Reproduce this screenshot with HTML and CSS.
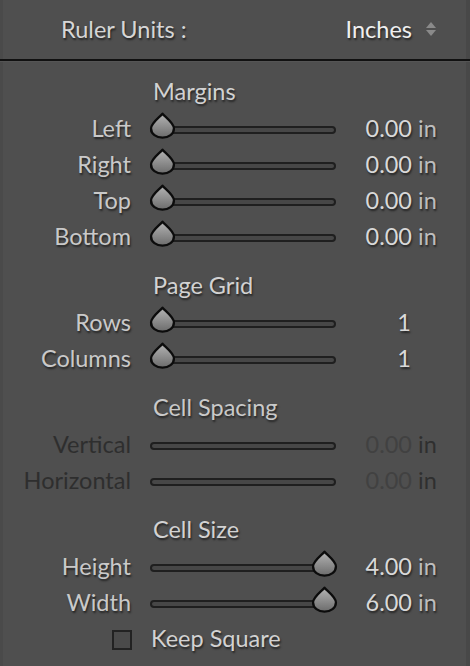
FILE: index.html
```html
<!DOCTYPE html>
<html>
<head>
<meta charset="utf-8">
<link rel="stylesheet" href="styles.css">
</head>
<body>
<div class="panel">
  <div class="units">
    <span class="units-label">Ruler Units :</span>
    <span class="units-value">Inches
      <svg class="spinner" width="12" height="16" viewBox="0 0 12 16"><path d="M6 1 L11 7 H1 Z" fill="#8a8a8a"/><path d="M1 9 H11 L6 15 Z" fill="#8a8a8a"/></svg>
    </span>
  </div>
  <div class="rule"></div>

  <div class="section">
    <div class="head">Margins</div>
    <div class="row"><span class="label">Left</span><div class="track"><svg class="thumb" viewBox="0 0 26 26"><use href="#drop"/></svg></div><span class="num">0.00</span><span class="unit">in</span></div>
    <div class="row"><span class="label">Right</span><div class="track"><svg class="thumb" viewBox="0 0 26 26"><use href="#drop"/></svg></div><span class="num">0.00</span><span class="unit">in</span></div>
    <div class="row"><span class="label">Top</span><div class="track"><svg class="thumb" viewBox="0 0 26 26"><use href="#drop"/></svg></div><span class="num">0.00</span><span class="unit">in</span></div>
    <div class="row"><span class="label">Bottom</span><div class="track"><svg class="thumb" viewBox="0 0 26 26"><use href="#drop"/></svg></div><span class="num">0.00</span><span class="unit">in</span></div>
  </div>

  <div class="section">
    <div class="head">Page Grid</div>
    <div class="row"><span class="label">Rows</span><div class="track"><svg class="thumb" viewBox="0 0 26 26"><use href="#drop"/></svg></div><span class="num one">1</span><span class="unit"></span></div>
    <div class="row"><span class="label">Columns</span><div class="track"><svg class="thumb" viewBox="0 0 26 26"><use href="#drop"/></svg></div><span class="num one">1</span><span class="unit"></span></div>
  </div>

  <div class="section disabled">
    <div class="head">Cell Spacing</div>
    <div class="row"><span class="label">Vertical</span><div class="track"></div><span class="num">0.00</span><span class="unit">in</span></div>
    <div class="row"><span class="label">Horizontal</span><div class="track"></div><span class="num">0.00</span><span class="unit">in</span></div>
  </div>

  <div class="section">
    <div class="head">Cell Size</div>
    <div class="row"><span class="label">Height</span><div class="track"><svg class="thumb end" viewBox="0 0 26 26"><use href="#drop"/></svg></div><span class="num">4.00</span><span class="unit">in</span></div>
    <div class="row"><span class="label">Width</span><div class="track"><svg class="thumb end" viewBox="0 0 26 26"><use href="#drop"/></svg></div><span class="num">6.00</span><span class="unit">in</span></div>
    <div class="check-row"><span class="box"></span><span class="check-label">Keep Square</span></div>
  </div>
</div>

<svg width="0" height="0" class="defs">
  <defs>
    <linearGradient id="g" x1="0" y1="0" x2="0" y2="1">
      <stop offset="0" stop-color="#b4b4b4"/>
      <stop offset="1" stop-color="#6c6c6c"/>
    </linearGradient>
    <symbol id="drop" viewBox="0 0 26 26">
      <path d="M13 1.6 C15.8 5 24 10.5 24 15.8 C24 21.2 19 24.6 13 24.6 C7 24.6 2 21.2 2 15.8 C2 10.5 10.2 5 13 1.6 Z" fill="url(#g)" stroke="#0c0c0c" stroke-width="2.2" stroke-linejoin="round"/>
    </symbol>
  </defs>
</svg>
</body>
</html>
```
FILE: styles.css
```css
html, body {
  margin: 0;
  padding: 0;
  background: #4f4f4f;
}
body {
  width: 470px;
  height: 666px;
  overflow: hidden;
  font-family: Lato, "Open Sans", sans-serif;
  font-size: 23.5px;
  color: #cdcdcd;
}
.panel {
  height: 666px;
  box-sizing: border-box;
  border-left: 3px solid #4a4a4a;
  border-right: 4px solid #484848;
  text-shadow: 1px 2px 2px rgba(0, 0, 0, 0.55);
}
.units {
  height: 59px;
  display: flex;
  align-items: center;
  justify-content: space-between;
  padding: 0 29px 2px 58px;
  box-sizing: border-box;
}
.units-label {
  color: #d6d6d6;
}
.units-value {
  display: flex;
  align-items: center;
  gap: 13px;
  color: #efefef;
}
.spinner {
  display: block;
}
.rule {
  height: 2px;
  background: #111;
  border-bottom: 1px solid #555;
  margin: 0 -4px 0 -3px;
}
.section {
  padding-top: 14px;
}
.section:first-of-type {
  padding-top: 12px;
}
.head {
  height: 36px;
  line-height: 36px;
  padding-left: 150px;
  margin-top: -3px;
  margin-bottom: 3px;
  color: #d2d2d2;
}
.row {
  height: 36px;
  display: grid;
  grid-template-columns: 128px 205px 76px 30px;
  align-items: center;
}
.label, .num, .unit {
  padding-bottom: 5px;
}
.label {
  text-align: right;
  color: #c9c9c9;
}
.track {
  position: relative;
  margin-left: 19px;
  width: 186px;
  height: 8px;
  box-sizing: border-box;
  border: 2px solid #1f1f1f;
  border-radius: 5px;
  background: #474747;
}
.thumb {
  position: absolute;
  width: 27px;
  height: 27px;
  left: -3px;
  top: -16px;
}
.thumb.end {
  left: auto;
  right: -4px;
}
.num {
  text-align: right;
  color: #d9d9d9;
}
.num.one {
  padding-right: 1px;
}
.unit {
  padding-left: 6px;
  color: #bdbdbd;
}
.disabled .label {
  color: #2e2e2e;
  text-shadow: none;
}
.disabled .num {
  color: #414141;
  text-shadow: none;
}
.disabled .unit {
  color: #2f2f2f;
  text-shadow: none;
}
.disabled .head {
  color: #c9c9c9;
}
.check-row {
  height: 36px;
  display: flex;
  align-items: center;
  padding-left: 109px;
}
.box {
  width: 16px;
  height: 16px;
  border: 2px solid #222;
  background: #4a4a4a;
  margin-right: 19px;
}
.check-label {
  color: #d2d2d2;
  padding-bottom: 4px;
}
.defs {
  position: absolute;
}
```
